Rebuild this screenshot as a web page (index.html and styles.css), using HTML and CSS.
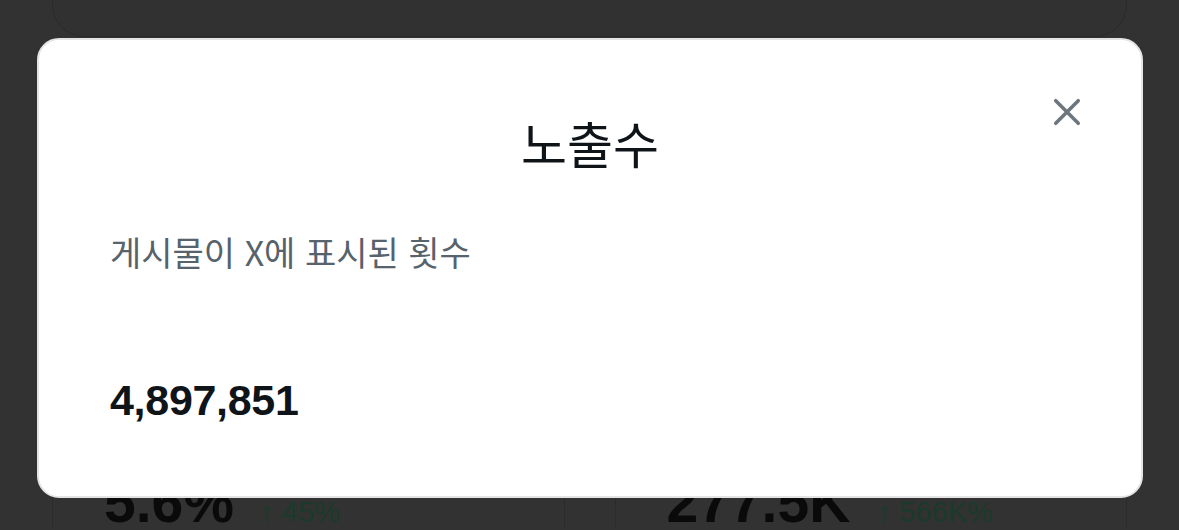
FILE: index.html
```html
<!DOCTYPE html>
<html lang="ko">
<head>
  <meta charset="UTF-8" />
  <meta name="viewport" content="width=device-width, initial-scale=1.0" />
  <title>노출수</title>
  <link rel="stylesheet" href="styles.css">
</head>
<body>
  <div class="page">
    <div class="top-card"></div>
    <div class="stats">
      <div class="stat">
        <span class="stat-value">5.6%</span>
        <span class="stat-change">↑ 45%</span>
      </div>
      <div class="stat">
        <span class="stat-value">277.5K</span>
        <span class="stat-change">↑ 566K%</span>
      </div>
    </div>
  </div>

  <div class="modal">
    <button class="close" aria-label="닫기">
      <svg viewBox="0 0 24 24" width="36" height="36">
        <path d="M4.5 4.5 L19.5 19.5 M19.5 4.5 L4.5 19.5" stroke="currentColor" stroke-width="2.4" stroke-linecap="round" fill="none"/>
      </svg>
    </button>
    <h2 class="modal-title">노출수</h2>
    <p class="modal-desc">게시물이 X에 표시된 횟수</p>
    <div class="modal-value">4,897,851</div>
  </div>
</body>
</html>
```

FILE: styles.css
```css
html, body { margin: 0; height: 100%; }
body {
  background: #323232;
  overflow: hidden;
  font-family: "Noto Sans CJK KR", "Liberation Sans", sans-serif;
}
.page { padding: 0 52px; }
.top-card {
  height: 60px;
  margin-top: -25px;
  border: 1px solid #2a2a2a;
  border-radius: 0 0 32px 32px;
  background: #313131;
}
.stats {
  display: grid;
  grid-template-columns: 1fr 1fr;
  gap: 50px;
  margin-top: 412px;
}
.stat {
  border-left: 1px solid #2b2b2b;
  border-right: 1px solid #2b2b2b;
  padding: 20px 0 0 51px;
  height: 60px;
  white-space: nowrap;
}
.stat-value {
  font-family: "Liberation Sans", sans-serif;
  font-weight: bold;
  font-size: 57px;
  color: #0a0a0a;
}
.stat-change {
  font-family: "Liberation Sans", sans-serif;
  font-size: 29px;
  color: #1a3a2b;
  margin-left: 22px;
}
.modal {
  position: absolute;
  left: 37px;
  top: 38px;
  width: 1106px;
  height: 460px;
  box-sizing: border-box;
  background: #fff;
  border: 2px solid #e4e4e4;
  border-radius: 22px;
  padding: 74px 71px 0 71px;
}
.close {
  position: absolute;
  right: 54px;
  top: 52px;
  width: 40px;
  height: 40px;
  padding: 0;
  border: none;
  background: none;
  color: #6e767d;
  display: flex;
  align-items: center;
  justify-content: center;
}
.modal-title {
  margin: 0;
  text-align: center;
  font-size: 50px;
  line-height: 56px;
  font-weight: 400;
  color: #0f1419;
}
.modal-desc {
  margin: 62px 0 0;
  font-size: 34px;
  line-height: 40px;
  color: #56626c;
}
.modal-value {
  margin-top: 102px;
  font-family: "Liberation Sans", sans-serif;
  font-weight: bold;
  font-size: 43px;
  line-height: 52px;
  color: #0f1419;
  letter-spacing: -0.3px;
}
```
